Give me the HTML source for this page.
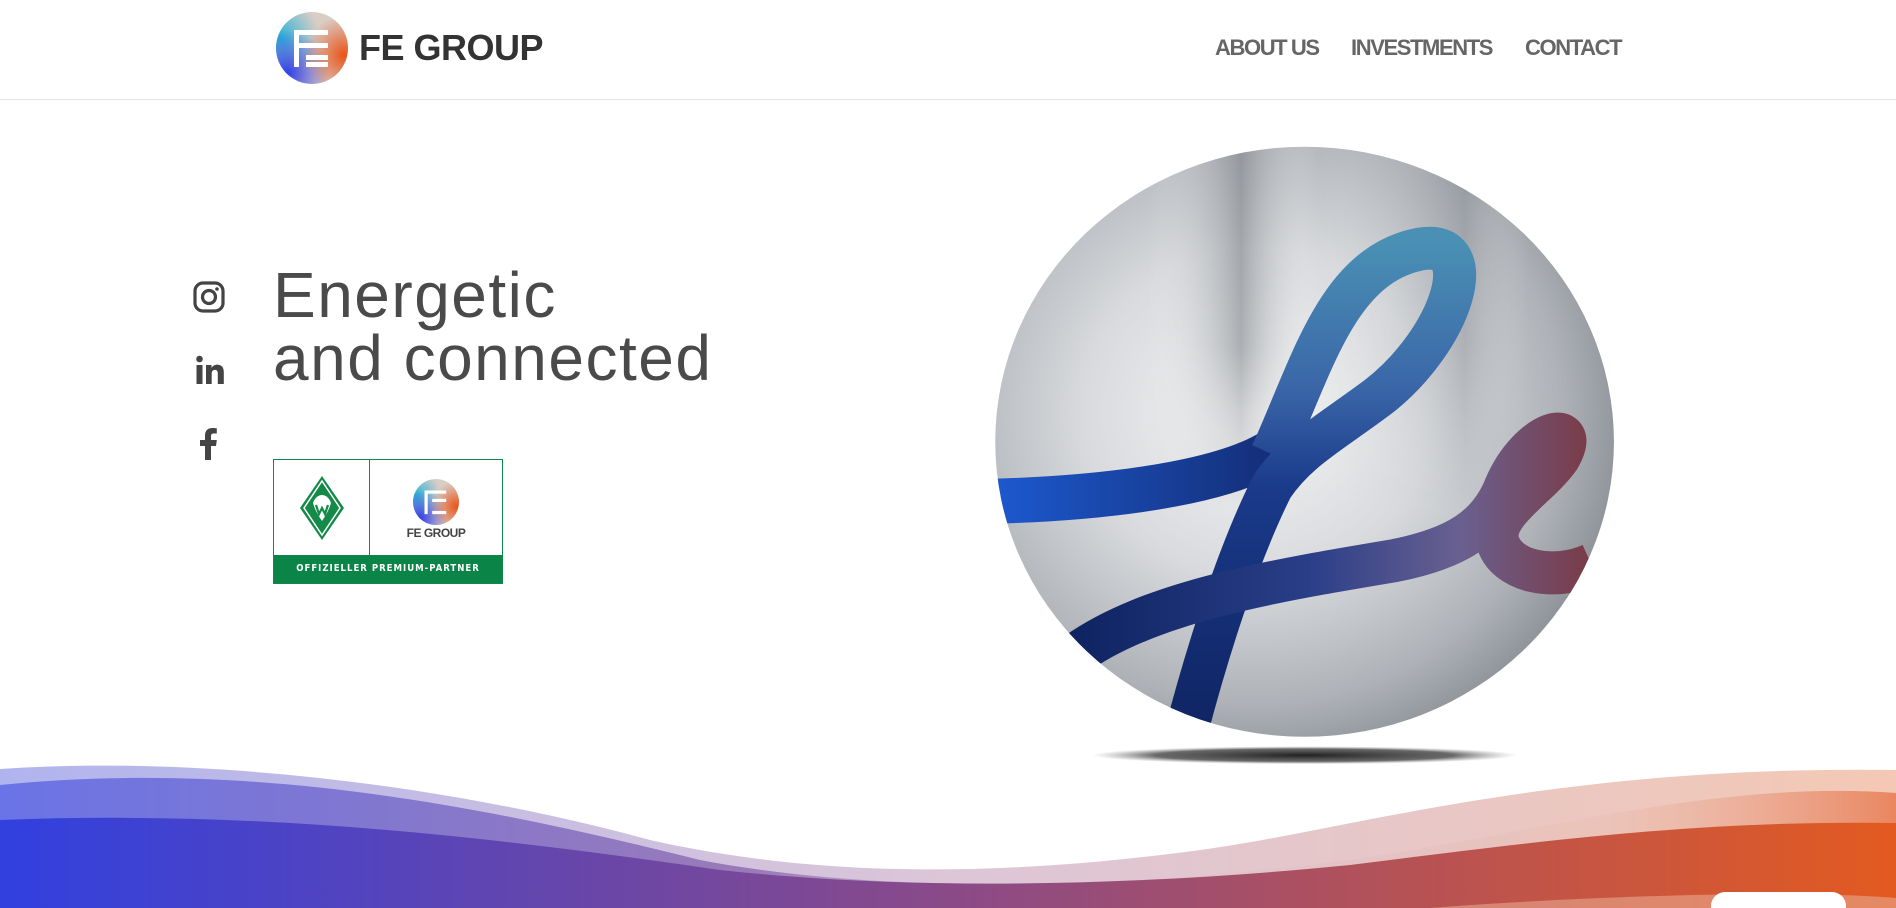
<!DOCTYPE html>
<html><head><meta charset="utf-8"><style>
html,body{margin:0;padding:0;width:1896px;height:908px;overflow:hidden;background:#fff;font-family:"Liberation Sans",sans-serif;position:relative}
.hdr{position:absolute;left:0;top:0;width:1896px;height:99px;border-bottom:1px solid #e2e2e2;background:#fff}
.brand{position:absolute;left:359px;top:27px;font-size:36px;font-weight:bold;color:#333;letter-spacing:-0.5px}
.nav{position:absolute;top:35px;font-size:22px;font-weight:bold;color:#666;letter-spacing:-1.4px}
.h1{position:absolute;left:273px;font-size:64px;color:#4a4a4a;font-weight:normal;letter-spacing:1.5px}
</style></head><body>
<svg width="0" height="0" style="position:absolute"><defs>
<radialGradient id="lb" cx="0.15" cy="0.85" r="0.6"><stop offset="0" stop-color="#2f3fe6"/><stop offset="1" stop-color="#2f3fe6" stop-opacity="0"/></radialGradient>
<radialGradient id="lt" cx="0.05" cy="0.35" r="0.55"><stop offset="0" stop-color="#25b4d8"/><stop offset="1" stop-color="#25b4d8" stop-opacity="0"/></radialGradient>
<radialGradient id="lo" cx="0.95" cy="0.6" r="0.55"><stop offset="0" stop-color="#ea5418"/><stop offset="1" stop-color="#ea5418" stop-opacity="0"/></radialGradient>
</defs></svg>
<div class="hdr">
<svg style="position:absolute;left:276px;top:12px" width="72" height="72" viewBox="0 0 72 72">
<circle cx="36" cy="36" r="36" fill="#d9cdc6"/>
<circle cx="36" cy="36" r="36" fill="url(#lt)"/>
<circle cx="36" cy="36" r="36" fill="url(#lb)"/>
<circle cx="36" cy="36" r="36" fill="url(#lo)"/>
<rect x="18" y="18" width="5" height="37" fill="#fff"/><rect x="18" y="18" width="34" height="5" fill="#fff"/><rect x="18" y="31" width="12" height="5" fill="#fff"/><rect x="30" y="31" width="22" height="5" fill="#fff"/><rect x="30" y="43" width="22" height="5" fill="#fff"/><rect x="30" y="50" width="22" height="5" fill="#fff"/>
</svg>
<div class="brand">FE GROUP</div>
<div class="nav" style="left:1215px">ABOUT US</div>
<div class="nav" style="left:1351px">INVESTMENTS</div>
<div class="nav" style="left:1525px">CONTACT</div>
</div>

<svg style="position:absolute;left:193px;top:281px" width="32" height="32" viewBox="0 0 32 32"><rect x="2" y="2" width="28" height="28" rx="8" fill="none" stroke="#444" stroke-width="3.2"/><circle cx="16" cy="16" r="6.5" fill="none" stroke="#444" stroke-width="3.2"/><circle cx="24" cy="8" r="1.8" fill="#444"/></svg>
<svg style="position:absolute;left:196px;top:355px" width="28" height="30" viewBox="0 0 28 30"><circle cx="3.5" cy="4" r="3.3" fill="#444"/><rect x="0.5" y="10" width="6" height="19" fill="#444"/><path d="M10 10h5.5v3c1.5-2.5 4-3.5 6.5-3.3 4 .3 5.8 3 5.8 7.5V29h-6V18.5c0-2.3-.9-3.6-2.9-3.6-2.1 0-3.2 1.5-3.2 3.8V29H10z" fill="#444"/></svg>
<svg style="position:absolute;left:199px;top:428px" width="20" height="32" viewBox="0 0 20 32"><path d="M6 32V18H1v-6h5V7.5C6 2.5 9 0 13.5 0c2 0 3.8.2 4.3.3v5.2h-3c-2.3 0-2.8 1.1-2.8 2.7V12h5.8l-.8 6H12v14z" fill="#444"/></svg>

<div class="h1" style="top:258px">Energetic</div>
<div class="h1" style="top:321px">and connected</div>

<div style="position:absolute;left:273px;top:459px;width:230px;height:125px;border:1px solid #0e8a4a;box-sizing:border-box;background:#fff">
<div style="position:absolute;left:95px;top:0;width:1px;height:95px;background:#0e8a4a"></div>
<svg style="position:absolute;left:25px;top:15px" width="46" height="66" viewBox="0 0 46 66"><path d="M23 1L45 33 23 65 1 33z" fill="#138a48"/><path d="M23 6L41 33 23 60 5 33z" fill="none" stroke="#fff" stroke-width="1.5"/><path d="M14 28c2-6 6-8 9-8s7 2 9 8c-2 7-5 12-9 18-4-6-7-11-9-18z" fill="#fff"/><path d="M17 30l3 9 3-6 3 6 3-9" fill="none" stroke="#138a48" stroke-width="2.2"/></svg>
<svg style="position:absolute;left:139px;top:19px" width="46" height="46" viewBox="0 0 72 72"><circle cx="36" cy="36" r="36" fill="#d9cdc6"/><circle cx="36" cy="36" r="36" fill="url(#lt)"/><circle cx="36" cy="36" r="36" fill="url(#lb)"/><circle cx="36" cy="36" r="36" fill="url(#lo)"/><rect x="18" y="18" width="5" height="37" fill="#fff"/><rect x="18" y="18" width="34" height="5" fill="#fff"/><rect x="30" y="31" width="22" height="5" fill="#fff"/><rect x="30" y="50" width="22" height="5" fill="#fff"/></svg>
<div style="position:absolute;left:96px;width:132px;top:66px;text-align:center;font-size:12px;font-weight:bold;color:#444;letter-spacing:-0.5px">FE GROUP</div>
<div style="position:absolute;left:0;bottom:0;width:100%;height:28px;background:#0a8447;color:#fff;font-size:9.5px;font-weight:bold;letter-spacing:1px;text-align:center;line-height:28px;font-family:'DejaVu Sans Condensed','Liberation Sans',sans-serif">OFFIZIELLER PREMIUM-PARTNER</div>
</div>

<svg style="position:absolute;left:985px;top:118px" width="640" height="650" viewBox="0 0 1562 1586">
<defs>
<radialGradient id="sph" cx="0.42" cy="0.45" r="0.62"><stop offset="0" stop-color="#f4f5f6"/><stop offset="0.45" stop-color="#d8dadd"/><stop offset="0.8" stop-color="#aeb2b7"/><stop offset="1" stop-color="#888d93"/></radialGradient>
<linearGradient id="band" x1="0" y1="0" x2="1" y2="0"><stop offset="0.25" stop-color="#fff" stop-opacity="0"/><stop offset="0.4" stop-color="#6e7379" stop-opacity="0.5"/><stop offset="0.52" stop-color="#fff" stop-opacity="0"/><stop offset="0.75" stop-color="#6e7379" stop-opacity="0.3"/><stop offset="0.85" stop-color="#fff" stop-opacity="0"/></linearGradient>
<linearGradient id="bandfade" x1="0" y1="0" x2="0" y2="1"><stop offset="0" stop-color="#fff"/><stop offset="0.35" stop-color="#fff"/><stop offset="0.6" stop-color="#000"/></linearGradient>
<mask id="bm"><rect x="0" y="0" width="1562" height="1586" fill="url(#bandfade)"/></mask>
<linearGradient id="r1" x1="0" y1="300" x2="0" y2="1500" gradientUnits="userSpaceOnUse"><stop offset="0" stop-color="#4a90b4"/><stop offset="0.3" stop-color="#3a66a8"/><stop offset="0.5" stop-color="#1a3a8a"/><stop offset="1" stop-color="#0f2462"/></linearGradient>
<linearGradient id="r2" x1="230" y1="0" x2="1470" y2="0" gradientUnits="userSpaceOnUse"><stop offset="0" stop-color="#0f2462"/><stop offset="0.45" stop-color="#2a3e88"/><stop offset="0.75" stop-color="#6a6090"/><stop offset="1" stop-color="#7a3c48"/></linearGradient>
<linearGradient id="r0" x1="40" y1="0" x2="760" y2="0" gradientUnits="userSpaceOnUse"><stop offset="0" stop-color="#1c58cc"/><stop offset="1" stop-color="#142a70"/></linearGradient>
<radialGradient id="sh" cx="0.5" cy="0.5" r="0.5"><stop offset="0" stop-color="#222"/><stop offset="0.7" stop-color="#444" stop-opacity="0.8"/><stop offset="1" stop-color="#888" stop-opacity="0"/></radialGradient>
<clipPath id="cp"><ellipse cx="780" cy="790" rx="755" ry="720"/></clipPath>
</defs>
<ellipse cx="780" cy="1555" rx="520" ry="22" fill="url(#sh)"/>
<ellipse cx="780" cy="790" rx="755" ry="720" fill="url(#sph)"/>
<g clip-path="url(#cp)">
<rect x="0" y="0" width="1562" height="1586" fill="url(#band)" mask="url(#bm)"/>
<path d="M30 935 C 350 925, 620 880, 720 800" fill="none" stroke="url(#r0)" stroke-width="110"/>
<path d="M700 820 C 800 600, 860 360, 1060 320 C 1220 290, 1140 540, 960 680 C 840 770, 760 810, 700 900 C 620 1060, 540 1300, 470 1580" fill="none" stroke="url(#r1)" stroke-width="105"/>
<path d="M220 1310 C 400 1180, 700 1130, 1000 1080 C 1150 1050, 1230 1000, 1270 900 C 1330 760, 1460 730, 1400 830 C 1350 900, 1240 960, 1250 1030 C 1270 1110, 1390 1130, 1480 1090" fill="none" stroke="url(#r2)" stroke-width="105"/>
</g>
</svg>

<svg style="position:absolute;left:0;top:740px" width="1896" height="168" viewBox="0 740 1896 168" preserveAspectRatio="none">
<defs><linearGradient id="wg" x1="0" y1="0" x2="1" y2="0"><stop offset="0" stop-color="#3140df"/><stop offset="0.5" stop-color="#8a4a88"/><stop offset="1" stop-color="#e35a20"/></linearGradient>
<linearGradient id="wl" x1="0" y1="0" x2="1" y2="0"><stop offset="0" stop-color="#b0b4ee"/><stop offset="0.5" stop-color="#dcc6d8"/><stop offset="1" stop-color="#f4c8b4"/></linearGradient>
<linearGradient id="wm" x1="0" y1="0" x2="1" y2="0"><stop offset="0" stop-color="#6a74e6"/><stop offset="0.4" stop-color="#9a7ab8"/><stop offset="0.6" stop-color="#d8bcd0" stop-opacity="0.3"/><stop offset="0.85" stop-color="#e8b8a8" stop-opacity="0.3"/><stop offset="1" stop-color="#ea8660"/></linearGradient></defs>
<path d="M0 769 C 200 755, 450 785, 650 840 C 850 885, 1050 870, 1200 850 C 1350 830, 1550 765, 1896 770 V908 H0z" fill="url(#wl)"/>
<path d="M0 785 C 250 760, 480 805, 700 860 C 900 898, 1150 885, 1350 860 C 1550 830, 1720 780, 1896 793 V908 H0z" fill="url(#wm)"/>
<path d="M0 820 C 250 810, 480 835, 720 870 C 920 892, 1150 885, 1350 865 C 1550 840, 1700 820, 1896 823 V908 H0z" fill="url(#wg)"/>
<path d="M1430 908 C 1600 895, 1800 890, 1896 898 V908z" fill="#e8a890" opacity="0.6"/>
<rect x="1711" y="892" width="135" height="30" rx="14" fill="#fff"/>
</svg>
</body></html>
